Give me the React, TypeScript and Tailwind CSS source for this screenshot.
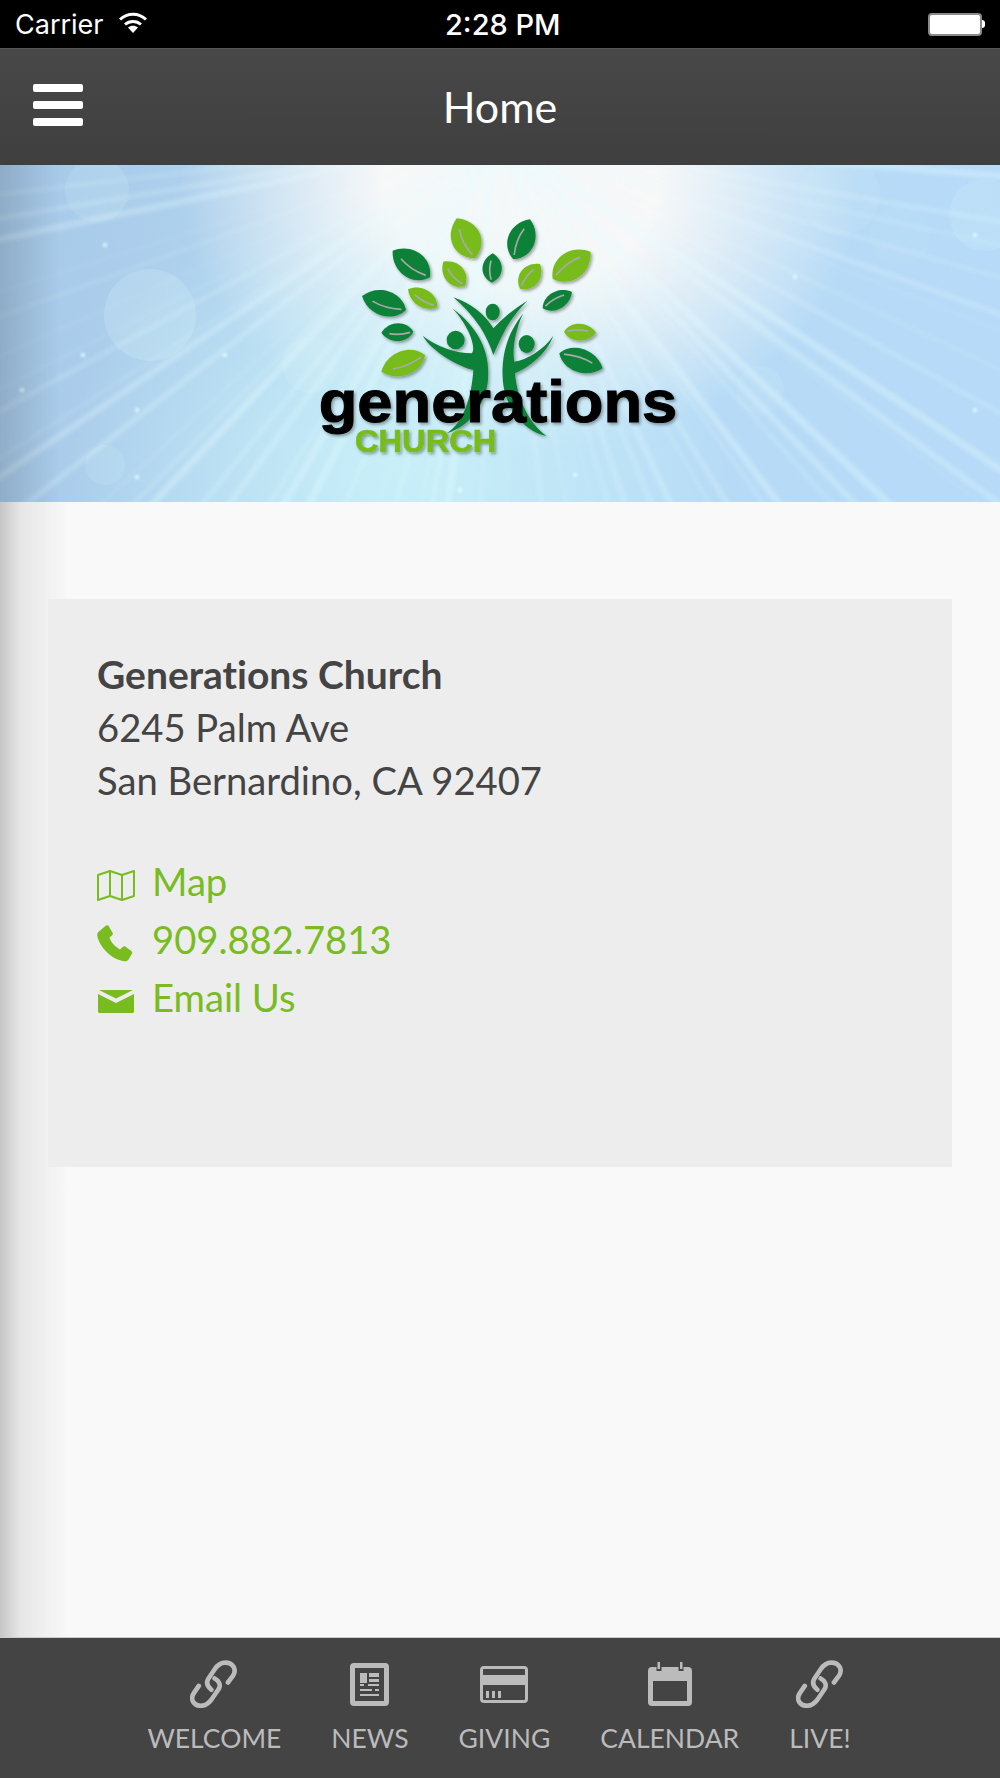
const LEAVES = [
  { a: [530, 85], b: [585, 205], w: 70, c: '#78bc1f' },
  { a: [750, 88], b: [700, 208], w: 64, c: '#0b8139' },
  { a: [338, 182], b: [450, 262], w: 64, c: '#0b8139' },
  { a: [490, 215], b: [555, 288], w: 48, c: '#78bc1f' },
  { a: [638, 190], b: [635, 278], w: 46, c: '#0b8139' },
  { a: [780, 222], b: [720, 296], w: 48, c: '#78bc1f' },
  { a: [932, 186], b: [818, 266], w: 66, c: '#78bc1f' },
  { a: [246, 318], b: [378, 360], w: 60, c: '#0b8139' },
  { a: [384, 298], b: [472, 350], w: 42, c: '#78bc1f' },
  { a: [876, 306], b: [788, 355], w: 42, c: '#0b8139' },
  { a: [304, 428], b: [400, 425], w: 42, c: '#0b8139' },
  { a: [948, 428], b: [852, 425], w: 40, c: '#78bc1f' },
  { a: [304, 545], b: [435, 495], w: 58, c: '#78bc1f' },
  { a: [968, 535], b: [838, 490], w: 56, c: '#0b8139' },
];

function leafPaths(a: number[], b: number[], w: number) {
  const dx = b[0] - a[0];
  const dy = b[1] - a[1];
  const len = Math.hypot(dx, dy);
  const nx = (-dy / len) * w * 0.84;
  const ny = (dx / len) * w * 0.84;
  const at = (t: number, s: number) => `${a[0] + dx * t + nx * s},${a[1] + dy * t + ny * s}`;
  return {
    body: `M${a[0]},${a[1]} C${at(0.25, 1)} ${at(0.8, 1)} ${b[0]},${b[1]} C${at(0.8, -1)} ${at(0.25, -1)} ${a[0]},${a[1]}Z`,
    vein: `M${at(0.25, 0.1)} Q${at(0.55, 0.3)} ${at(0.9, 0.05)}`,
  };
}

// light rays spreading from the glow above the hero
const RAYS = Array.from({ length: 56 }, (_, i) => {
  const seed = Math.sin(i * 12.9898) * 43758.5453;
  const r = seed - Math.floor(seed);
  const angle = (i / 56) * Math.PI + (r - 0.5) * 0.06;
  return {
    x: 500 + Math.cos(angle) * 1000,
    y: -30 + Math.sin(angle) * 1000,
    w: 1.5 + r * 6,
    o: 0.08 + r * 0.28,
  };
});

const BOKEH = [
  [97, 25, 32, 0.14], [150, 150, 46, 0.2], [840, 30, 40, 0.1], [985, 50, 36, 0.16], [105, 300, 20, 0.14],
  [310, 200, 28, 0.16], [760, 225, 24, 0.12], [900, 70, 30, 0.08],
];

const SPARKS = [
  [105, 80], [83, 190], [137, 245], [22, 225], [137, 312], [225, 190], [975, 245], [795, 112], [460, 325], [575, 310],
  [975, 70],
];

function Hero() {
  return (
    <div className="relative h-[337px] shrink-0 overflow-hidden bg-[linear-gradient(100deg,#a6c8e8_0%,#b8dcf4_45%,#b6daf8_100%)]">
      <div className="absolute inset-0 bg-[radial-gradient(ellipse_340px_270px_at_52%_5%,#f8f8f8_0%,#f8f8f8_40%,rgba(248,248,248,0)_100%)]" />
      <div className="absolute inset-0 bg-[radial-gradient(ellipse_330px_280px_at_40%_90%,rgba(205,245,250,0.8)_0%,rgba(205,245,250,0)_100%)]" />
      <svg className="absolute inset-0" width="1000" height="337" viewBox="0 0 1000 337">
        {BOKEH.map(([x, y, r, o], i) => (
          <circle key={i} cx={x} cy={y} r={r} fill="#dff8f8" opacity={o} />
        ))}
        <g className="blur-[2px]">
          {RAYS.map((ray, i) => (
            <line key={i} x1="500" y1="-30" x2={ray.x} y2={ray.y} stroke="#e6fbff" strokeWidth={ray.w} opacity={ray.o} />
          ))}
        </g>
        <g className="blur-[1px]">
          {SPARKS.map(([x, y], i) => (
            <circle key={i} cx={x} cy={y} r="2.5" fill="#eaffff" opacity="0.6" />
          ))}
        </g>
      </svg>
      {/* side menu shadow carries over the banner */}
      <div className="absolute inset-y-0 left-0 w-[60px] bg-[linear-gradient(90deg,rgba(0,0,0,0.14),rgba(0,0,0,0))]" />
      <div className="relative flex justify-center pt-[25px]">
        <Logo />
      </div>
    </div>
  );
}

function Logo() {
  return (
    <svg width="440" height="280" viewBox="0 0 1320 840">
      <defs>
        <filter id="soft" x="-10%" y="-10%" width="120%" height="120%">
          <feDropShadow dx="5" dy="6" stdDeviation="4" floodColor="#000" floodOpacity="0.35" />
        </filter>
      </defs>
      <g filter="url(#soft)">
        {LEAVES.map((leaf, i) => {
          const p = leafPaths(leaf.a, leaf.b, leaf.w);
          return (
            <g key={i}>
              <path d={p.body} fill={leaf.c} />
              <path d={p.vein} fill="none" stroke="#a9a9a9" strokeWidth="5" />
            </g>
          );
        })}
        <g fill="#0b8139">
          <ellipse cx="638" cy="366" rx="21" ry="25" />
          <ellipse cx="527" cy="450" rx="27" ry="28" />
          <ellipse cx="740" cy="462" rx="24" ry="27" />
          <path d="M520,322 Q600,350 640,415 Q680,370 742,332 Q690,385 665,440 Q650,470 640,495 Q625,450 600,410 Q565,360 520,322Z" />
          <path d="M517,355 C590,410 632,480 624,570 C618,640 570,710 500,730 C550,700 575,620 580,540 C540,530 460,490 428,437 C470,470 530,490 575,490 C590,480 570,410 517,355Z" />
          <path d="M730,370 C690,420 665,480 668,560 C670,640 720,720 800,738 C745,700 710,620 705,550 C750,530 800,490 820,437 C790,480 740,510 703,515 C695,470 710,410 730,370Z" />
        </g>
        <text x="116" y="695" fontFamily="'Liberation Sans', Arial, sans-serif" fontWeight="700" fontSize="176" textLength="1076" lengthAdjust="spacingAndGlyphs" fill="#000000" stroke="#000000" strokeWidth="3">
          generations
        </text>
        <text x="225" y="785" fontFamily="'Liberation Sans', Arial, sans-serif" fontWeight="700" fontSize="94" textLength="424" lengthAdjust="spacingAndGlyphs" fill="#78bc1f" stroke="#78bc1f" strokeWidth="2">
          CHURCH
        </text>
      </g>
    </svg>
  );
}

function StatusBar() {
  return (
    <div className="relative flex h-12 shrink-0 items-center justify-between bg-black pl-[15px] pr-[15px] font-['Inter',sans-serif] text-white">
      <div className="flex items-center gap-[14px]">
        <span className="text-[27px] leading-none">Carrier</span>
        <svg width="30" height="21" viewBox="0 0 30 21" fill="none" stroke="#fff" strokeWidth="3" className="-mt-[4px]">
          <path d="M2 7.500C9.500 .500 20.500 .500 28 7.500" />
          <path d="M7 12.500C11.500 8.500 18.500 8.500 23 12.500" />
          <path d="M15 21l-5-5.500c2.800-2.400 7.200-2.400 10 0z" fill="#fff" stroke="none" />
        </svg>
      </div>
      <span className="absolute left-[445px] top-[10px] text-[29px] font-medium leading-[30px]">2:28 PM</span>
      <div className="flex items-center">
        <div className="h-[23px] w-[54px] rounded-[4px] border-2 border-[#8a8a8a] bg-white" />
        <div className="h-2 w-[3px] rounded-r-full bg-white" />
      </div>
    </div>
  );
}

function NavBar() {
  return (
    <div className="relative flex h-[117px] shrink-0 items-center justify-center border-t border-[#555] bg-[linear-gradient(180deg,#484848,#3f3f3f)] pb-[2px]">
      <div className="absolute left-[33px] top-[35px] flex w-[50px] flex-col gap-[9px]">
        <div className="h-[8px] rounded-[2px] bg-white" />
        <div className="h-[8px] rounded-[2px] bg-white" />
        <div className="h-[8px] rounded-[2px] bg-white" />
      </div>
      <span className="text-[43px] leading-none text-white">Home</span>
    </div>
  );
}

function MapIcon() {
  return (
    <svg width="38" height="33" viewBox="0 0 38 33" fill="none" stroke="#78bc1f" strokeWidth="2">
      <path d="M1 6l12-4 12 4 12-4v25l-12 4-12-4-12 4z" strokeLinejoin="round" />
      <path d="M13 2v25M25 6v25" />
    </svg>
  );
}

function PhoneIcon() {
  return (
    <svg width="36" height="37" viewBox="0 0 36 37" fill="#78bc1f">
      <path d="M9 .500c1-.600 2-.300 2.600.600l4 6.600c.500.900.300 1.900-.400 2.600l-2.800 2.500c1.600 4.400 5.600 9 10.600 11.600l3-2.600c.800-.600 1.800-.700 2.600-.100l6 4.500c.900.700 1 1.800.300 2.600l-3.200 5.400c-1 1.600-2.800 2.400-4.600 2C14.500 34.500 3 22.500 .400 11.500c-.500-2 0-3.800 1.500-5z" />
    </svg>
  );
}

function MailIcon() {
  return (
    <svg width="36" height="23" viewBox="0 0 36 23" fill="#78bc1f" className="ml-[1px]">
      <path d="M1 0h34L18 8.500z" />
      <path d="M0 4l18 9 18-9v17.500c0 .800-.700 1.500-1.500 1.500h-33C.700 23 0 22.300 0 21.500z" />
    </svg>
  );
}

const LINKS = [
  { label: 'Map', icon: <MapIcon /> },
  { label: '909.882.7813', icon: <PhoneIcon /> },
  { label: 'Email Us', icon: <MailIcon /> },
];

function ContactCard() {
  return (
    <div className="h-[568px] bg-[#ededed] px-[49px] pt-[49px] text-[38.2px] leading-[53px] text-[#444444] [font-variant-ligatures:none]">
      <div className="text-[39px] font-bold">Generations Church</div>
      <div>6245 Palm Ave</div>
      <div>San Bernardino, CA 92407</div>
      <div className="mt-[45px] flex flex-col text-[#78bc1f]">
        {LINKS.map(link => (
          <div key={link.label} className="flex h-[58px] items-center">
            <div className="flex w-[55px] items-center pt-[9px]">{link.icon}</div>
            <span>{link.label}</span>
          </div>
        ))}
      </div>
    </div>
  );
}

function LinkIcon() {
  return (
    <svg width="48" height="48" viewBox="36 30 144 145" fill="none" stroke="#bbbbbb" strokeWidth="14" strokeLinecap="round">
      <path d="M150,98 L165,78 C178,58 165,38 142,38 C128,38 118,46 110,58 L90,88 C84,100 90,112 100,120" />
      <path d="M62,108 L47,130 C34,150 48,170 72,168 C84,167 92,160 100,150 L122,118 C130,104 122,92 110,86" />
    </svg>
  );
}

function NewsIcon() {
  return (
    <svg width="39" height="43" viewBox="0 0 39 43" fill="#bbbbbb">
      <path fillRule="evenodd" d="M4 0h31a4 4 0 0 1 4 4v35a4 4 0 0 1-4 4H4a4 4 0 0 1-4-4V4a4 4 0 0 1 4-4zm1 5v33h29V5z" />
      <path d="M10 10h7v10h-7zM19 10h10v4H19zM19 16h10v3H19zM10 21h4v2h-4zM18 21h11v2H18zM10 26h12v2H10zM25 26h4v2h-4zM10 31h19v2H10z" />
    </svg>
  );
}

function CardIcon() {
  return (
    <svg width="48" height="37" viewBox="0 0 48 37" fill="#bbbbbb">
      <path fillRule="evenodd" d="M4 0h40a4 4 0 0 1 4 4v29a4 4 0 0 1-4 4H4a4 4 0 0 1-4-4V4a4 4 0 0 1 4-4zm-1 4v29c0 .600.400 1 1 1h40c.600 0 1-.400 1-1V4c0-.600-.400-1-1-1H4c-.600 0-1 .400-1 1z" />
      <path d="M2 9h44v10H2zM6 25h3v7H6zM12 25h3v7h-3zM18 25h3v7h-3z" />
    </svg>
  );
}

function CalendarIcon() {
  return (
    <svg width="44" height="44" viewBox="0 0 44 44" fill="#bbbbbb">
      <path fillRule="evenodd" d="M4 5h4.500v4h5V5h17v4h5V5H40a4 4 0 0 1 4 4v31a4 4 0 0 1-4 4H4a4 4 0 0 1-4-4V9a4 4 0 0 1 4-4zm1 14v20h34V19z" />
      <path d="M9.500 0h2.500v7H9.500zM32 0h2.500v7H32z" />
    </svg>
  );
}

const TABS = [
  { label: 'WELCOME', icon: <LinkIcon /> },
  { label: 'NEWS', icon: <NewsIcon /> },
  { label: 'GIVING', icon: <CardIcon /> },
  { label: 'CALENDAR', icon: <CalendarIcon /> },
  { label: 'LIVE!', icon: <LinkIcon /> },
];

function TabBar() {
  return (
    <div className="flex h-[141px] shrink-0 justify-center gap-[50px] border-t border-[#ccc] bg-[#444444] pr-[2px] pt-[22px]">
      {TABS.map(tab => (
        <div key={tab.label} className="flex flex-col items-center">
          <div className="flex h-[48px] items-center">{tab.icon}</div>
          <span className="mt-[15px] text-[26.5px] leading-[30px] text-[#bbbbbb]">{tab.label}</span>
        </div>
      ))}
    </div>
  );
}

export default function App() {
  return (
    <div className="flex h-[1778px] w-[1000px] flex-col overflow-hidden bg-[#f9f9f9] font-['Lato',sans-serif]">
      <StatusBar />
      <NavBar />
      <Hero />
      <main className="relative flex-1 px-12 pt-[97px]">
        {/* shadow from the closed side menu */}
        <div className="absolute inset-y-0 left-0 w-[68px] bg-[linear-gradient(90deg,#c6c6c6,#e6e6e6_30%,rgba(249,249,249,0)_100%)]" />
        <div className="relative">
          <ContactCard />
        </div>
      </main>
      <TabBar />
    </div>
  );
}
